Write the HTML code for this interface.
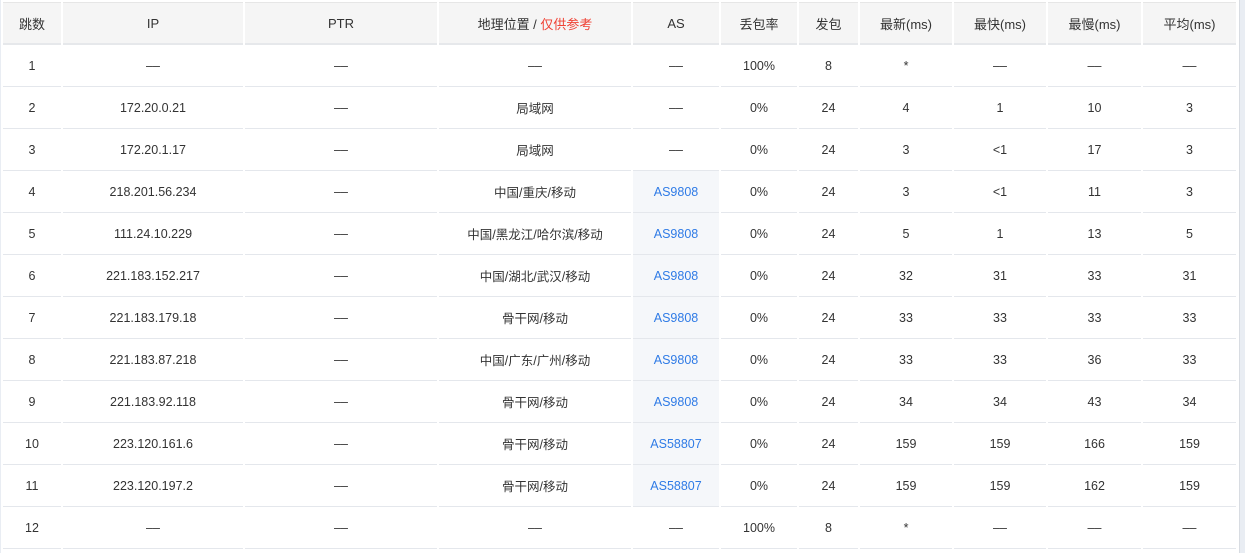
<!DOCTYPE html>
<html><head><meta charset="utf-8"><style>
html,body{margin:0;padding:0;width:1245px;height:553px;overflow:hidden;background:#e9edf3;}
.wrap{position:absolute;left:1px;top:0;width:1238px;height:553px;background:#fff;border-right:1px solid #d8dce2;}
table{position:absolute;left:0px;top:2px;border-collapse:separate;border-spacing:2px 0;table-layout:fixed;font-family:"Liberation Sans","Noto Sans CJK SC",sans-serif;font-size:12.5px;color:#333;}
th{background:#f5f5f5;font-weight:normal;height:40px;border-top:1px solid #e6e6e6;border-bottom:2px solid #e6e8eb;text-align:center;padding:0;font-size:13px;}
td{height:41px;border-bottom:1px solid #e4e7ec;text-align:center;padding:0;}
td.as{background:#f5f7fa;color:#2f7be6;}
.red{color:#f04134;}
</style></head><body><div class="wrap">
<table>
<colgroup><col style="width:58px"><col style="width:180px"><col style="width:192px"><col style="width:192px"><col style="width:86px"><col style="width:76px"><col style="width:59px"><col style="width:92px"><col style="width:92px"><col style="width:93px"><col style="width:93px"></colgroup>
<tr><th>跳数</th><th>IP</th><th>PTR</th><th>地理位置 / <span class="red">仅供参考</span></th><th>AS</th><th>丢包率</th><th>发包</th><th>最新(ms)</th><th>最快(ms)</th><th>最慢(ms)</th><th>平均(ms)</th></tr>
<tr><td>1</td><td>––</td><td>––</td><td>––</td><td>––</td><td>100%</td><td>8</td><td>*</td><td>––</td><td>––</td><td>––</td></tr>
<tr><td>2</td><td>172.20.0.21</td><td>––</td><td>局域网</td><td>––</td><td>0%</td><td>24</td><td>4</td><td>1</td><td>10</td><td>3</td></tr>
<tr><td>3</td><td>172.20.1.17</td><td>––</td><td>局域网</td><td>––</td><td>0%</td><td>24</td><td>3</td><td>&lt;1</td><td>17</td><td>3</td></tr>
<tr><td>4</td><td>218.201.56.234</td><td>––</td><td>中国/重庆/移动</td><td class="as">AS9808</td><td>0%</td><td>24</td><td>3</td><td>&lt;1</td><td>11</td><td>3</td></tr>
<tr><td>5</td><td>111.24.10.229</td><td>––</td><td>中国/黑龙江/哈尔滨/移动</td><td class="as">AS9808</td><td>0%</td><td>24</td><td>5</td><td>1</td><td>13</td><td>5</td></tr>
<tr><td>6</td><td>221.183.152.217</td><td>––</td><td>中国/湖北/武汉/移动</td><td class="as">AS9808</td><td>0%</td><td>24</td><td>32</td><td>31</td><td>33</td><td>31</td></tr>
<tr><td>7</td><td>221.183.179.18</td><td>––</td><td>骨干网/移动</td><td class="as">AS9808</td><td>0%</td><td>24</td><td>33</td><td>33</td><td>33</td><td>33</td></tr>
<tr><td>8</td><td>221.183.87.218</td><td>––</td><td>中国/广东/广州/移动</td><td class="as">AS9808</td><td>0%</td><td>24</td><td>33</td><td>33</td><td>36</td><td>33</td></tr>
<tr><td>9</td><td>221.183.92.118</td><td>––</td><td>骨干网/移动</td><td class="as">AS9808</td><td>0%</td><td>24</td><td>34</td><td>34</td><td>43</td><td>34</td></tr>
<tr><td>10</td><td>223.120.161.6</td><td>––</td><td>骨干网/移动</td><td class="as">AS58807</td><td>0%</td><td>24</td><td>159</td><td>159</td><td>166</td><td>159</td></tr>
<tr><td>11</td><td>223.120.197.2</td><td>––</td><td>骨干网/移动</td><td class="as">AS58807</td><td>0%</td><td>24</td><td>159</td><td>159</td><td>162</td><td>159</td></tr>
<tr><td>12</td><td>––</td><td>––</td><td>––</td><td>––</td><td>100%</td><td>8</td><td>*</td><td>––</td><td>––</td><td>––</td></tr>
</table></div></body></html>
